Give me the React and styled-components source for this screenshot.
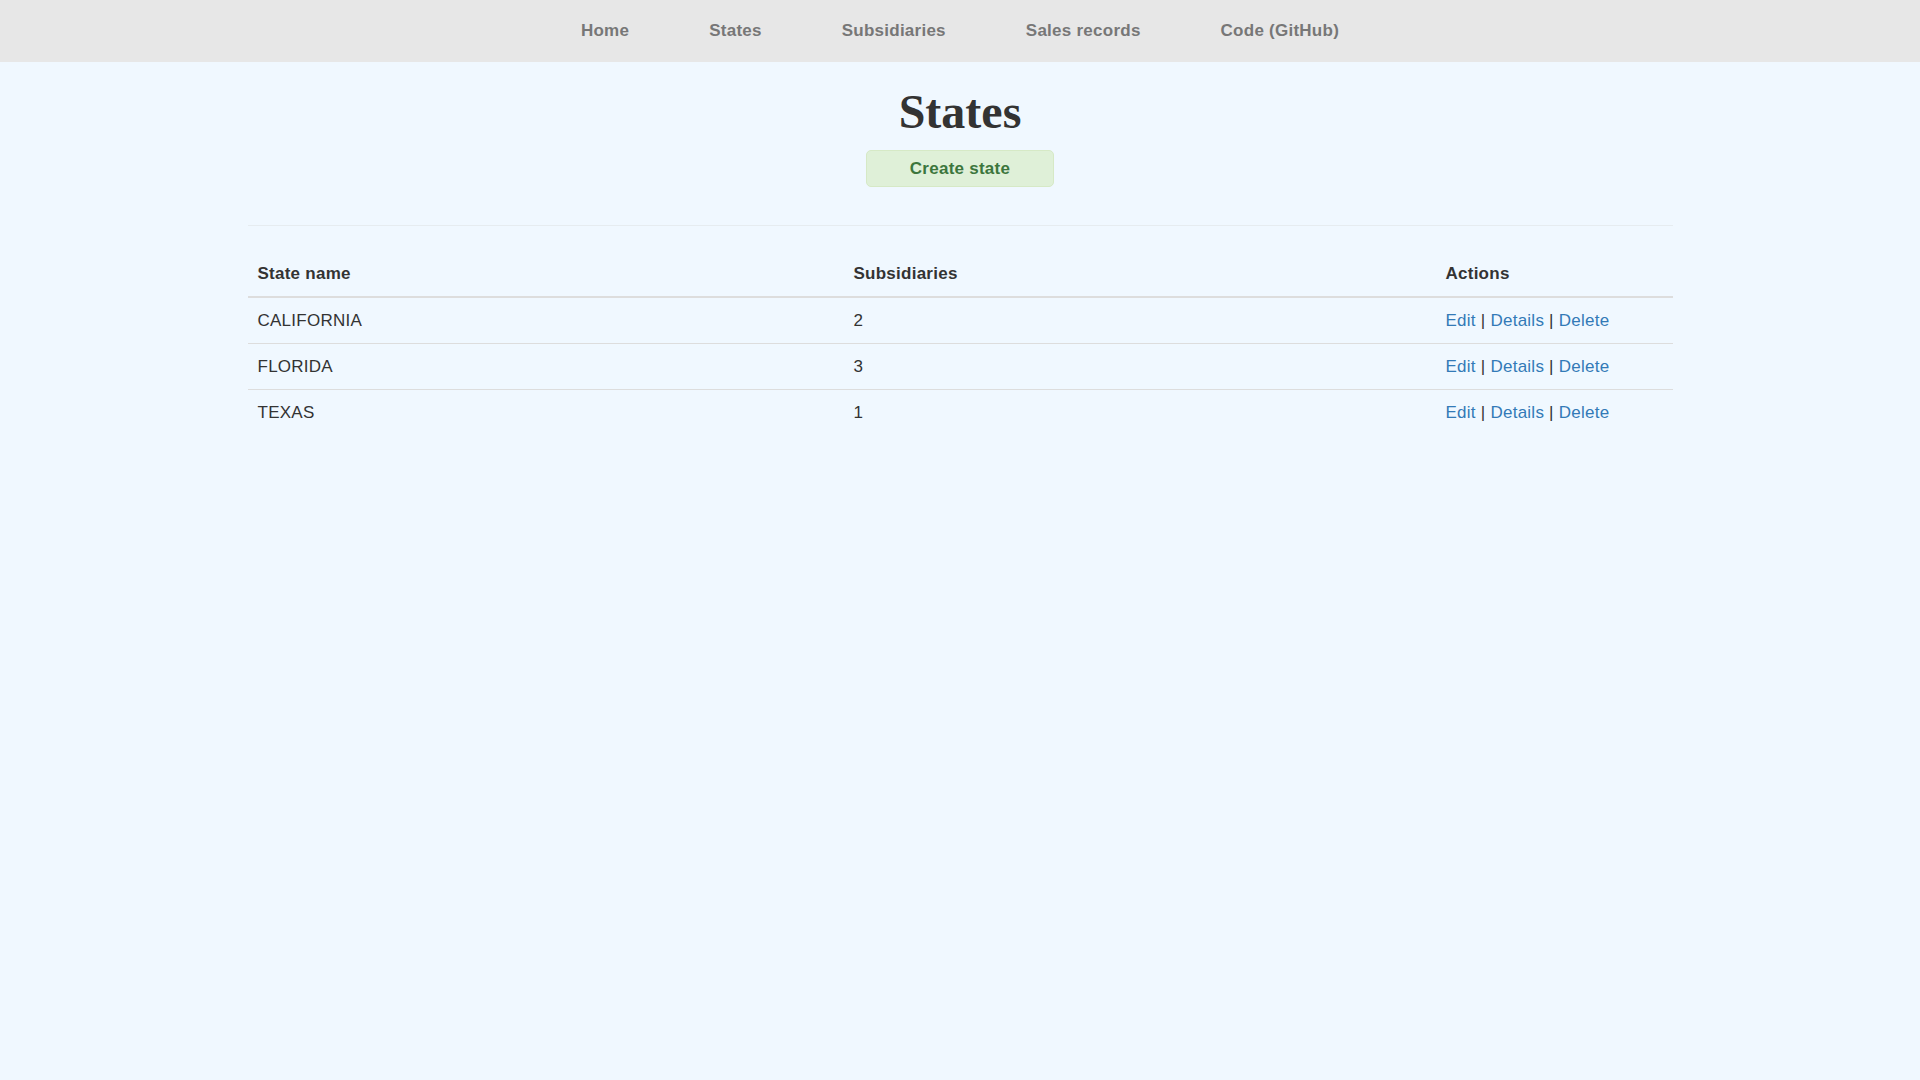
import React from "react";
import styled, { createGlobalStyle } from "styled-components";

const GlobalStyle = createGlobalStyle`
  html, body {
    margin: 0;
    padding: 0;
    background: #f0f8ff;
  }
  body {
    font-family: "Liberation Sans", Arial, sans-serif;
    font-size: 17px;
    letter-spacing: 0.25px;
    color: #333;
  }
  * { box-sizing: border-box; }
`;

const NavBar = styled.nav`
  height: 62px;
  background: #e7e7e7;
  display: flex;
  justify-content: center;
  align-items: center;
`;

const NavList = styled.ul`
  list-style: none;
  margin: 0;
  padding: 0;
  display: flex;
  gap: 80px;
`;

const NavLink = styled.a`
  font-weight: bold;
  font-size: 17px;
  line-height: 24px;
  color: #777;
  text-decoration: none;
  display: block;
`;

const Main = styled.main`
  max-width: 1425px;
  margin: 0 auto;
  padding-top: 23px;
  display: flex;
  flex-direction: column;
  align-items: center;
`;

const Title = styled.h1`
  margin: 0;
  font-family: "Liberation Serif", "Times New Roman", serif;
  font-weight: bold;
  font-size: 48px;
  line-height: 53px;
  letter-spacing: 0;
  color: #333;
`;

const CreateButton = styled.a`
  margin-top: 12px;
  width: 188px;
  height: 37px;
  display: flex;
  align-items: center;
  justify-content: center;
  background: #dff0d8;
  border: 1px solid #d6e9c6;
  border-radius: 5px;
  color: #3c763d;
  font-weight: bold;
  font-size: 17px;
  text-decoration: none;
`;

const Divider = styled.hr`
  width: 100%;
  margin: 38px 0 25px;
  border: 0;
  border-top: 1px solid #e6ecf0;
`;

const Table = styled.table`
  width: 100%;
  border-collapse: collapse;
  table-layout: fixed;
`;

const HeadCell = styled.th`
  text-align: left;
  font-weight: bold;
  padding: 10px;
  line-height: 25px;
  border-bottom: 2px solid #ddd;
  width: ${(p) => p.$w || "auto"};
`;

const Row = styled.tr`
  & + & td {
    border-top: 1px solid #ddd;
  }
`;

const Cell = styled.td`
  padding: 10px;
  line-height: 25px;
  vertical-align: top;
`;

const ActionLink = styled.a`
  color: #337ab7;
  text-decoration: none;
`;

const Sep = styled.span`
  color: #333;
`;

const states = [
  { name: "CALIFORNIA", count: 2 },
  { name: "FLORIDA", count: 3 },
  { name: "TEXAS", count: 1 },
];

export default function App() {
  return (
    <>
      <GlobalStyle />
      <NavBar>
        <NavList>
          {["Home", "States", "Subsidiaries", "Sales records", "Code (GitHub)"].map((t) => (
            <li key={t}>
              <NavLink href="#">{t}</NavLink>
            </li>
          ))}
        </NavList>
      </NavBar>
      <Main>
        <Title>States</Title>
        <CreateButton href="#">Create state</CreateButton>
        <Divider />
        <Table>
          <thead>
            <tr>
              <HeadCell $w="596px">State name</HeadCell>
              <HeadCell $w="592px">Subsidiaries</HeadCell>
              <HeadCell>Actions</HeadCell>
            </tr>
          </thead>
          <tbody>
            {states.map((s) => (
              <Row key={s.name}>
                <Cell>{s.name}</Cell>
                <Cell>{s.count}</Cell>
                <Cell>
                  <ActionLink href="#">Edit</ActionLink>
                  <Sep> | </Sep>
                  <ActionLink href="#">Details</ActionLink>
                  <Sep> | </Sep>
                  <ActionLink href="#">Delete</ActionLink>
                </Cell>
              </Row>
            ))}
          </tbody>
        </Table>
      </Main>
    </>
  );
}
